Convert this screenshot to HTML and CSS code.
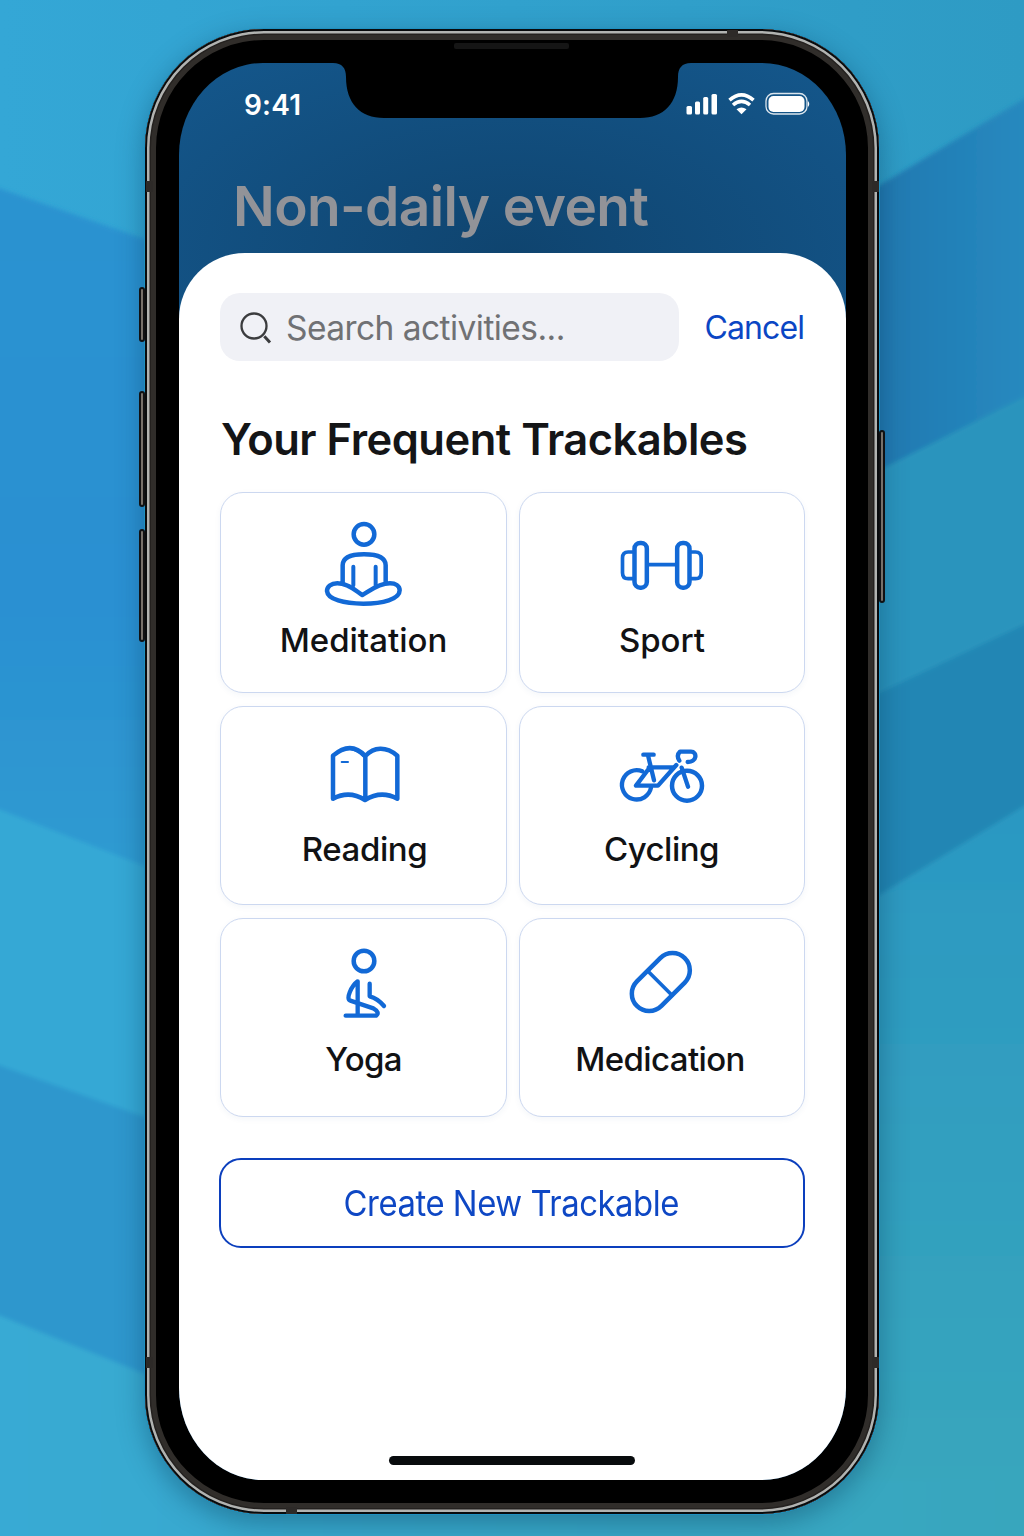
FILE: index.html
```html
<!DOCTYPE html>
<html lang="en">
<head>
<meta charset="utf-8">
<title>Non-daily event</title>
<link rel="stylesheet" href="styles.css">
</head>
<body>
<svg class="backdrop" viewBox="0 0 1024 1536" aria-hidden="true">
  <defs>
    <linearGradient id="base" x1="0" y1="0" x2="1" y2="0">
      <stop offset="0" stop-color="#34a7d6"/><stop offset="1" stop-color="#2e9bc4"/>
    </linearGradient>
    <linearGradient id="foot" gradientUnits="userSpaceOnUse" x1="0" y1="0" x2="1024" y2="0">
      <stop offset="0" stop-color="#38aad4"/><stop offset="1" stop-color="#38a6bd"/>
    </linearGradient>
    <linearGradient id="left" x1="0" y1="0" x2="0" y2="1">
      <stop offset="0" stop-color="#2b93d0"/><stop offset=".6" stop-color="#2b90d2"/><stop offset="1" stop-color="#2f9bd1"/>
    </linearGradient>
    <linearGradient id="right" gradientUnits="userSpaceOnUse" x1="870" y1="0" x2="1024" y2="0">
      <stop offset="0" stop-color="#1f78b0"/><stop offset="1" stop-color="#2789bf"/>
    </linearGradient>
    <linearGradient id="aqua" x1="0" y1="0" x2="0" y2="1">
      <stop offset="0" stop-color="#2b98c2"/><stop offset="1" stop-color="#38a6bd"/>
    </linearGradient>
    <filter id="soft"><feGaussianBlur stdDeviation="2"/></filter>
  </defs>
  <rect width="1024" height="1536" fill="url(#base)"/>
  <g filter="url(#soft)">
    <path d="M-10 185L170 248V876L-10 806z" fill="url(#left)"/>
    <path d="M-10 806L170 876V1126L-10 1062z" fill="#36a8d5"/>
    <path d="M-10 1062L170 1126V1384L-10 1312z" fill="#2d97cd"/>
    <path d="M-10 1312L170 1384L512 1450H1034V1546H-10z" fill="url(#foot)"/>
    <path d="M1034 93L860 197V480L1034 392z" fill="url(#right)"/>
    <path d="M1034 392L860 480V702L1034 620z" fill="#2994bd"/>
    <path d="M1034 620L860 702V907L1034 800z" fill="#2486b4"/>
    <path d="M1034 800L860 907V1480H1034z" fill="url(#aqua)"/>
  </g>
</svg>
<main class="phone">
  <span class="key key-mute"></span>
  <span class="key key-up"></span>
  <span class="key key-down"></span>
  <span class="key key-power"></span>
  <span class="seam seam-tl"></span>
  <span class="seam seam-tr"></span>
  <span class="seam seam-bl"></span>
  <span class="seam seam-br"></span>
  <span class="seam seam-top"></span>
  <span class="seam seam-bottom"></span>
  <span class="speaker"></span>
  <div class="screen">
    <svg class="notch" viewBox="0 0 358 56" aria-hidden="true"><path d="M0 0V1C9 1 13 6 13 15C13 41 27 56 51 56H307C331 56 345 41 345 15C345 6 349 1 358 1V0z"/></svg>
    <header class="status">
      <span class="time">9:41</span>
      <svg class="indicators" width="124" height="24" viewBox="0 0 124 24" aria-hidden="true">
        <g fill="#fff">
          <rect x=".5" y="14" width="5.500" height="8.500" rx="1.500"/>
          <rect x="9" y="9.500" width="5" height="13" rx="1.500"/>
          <rect x="17.200" y="5" width="5" height="17.500" rx="1.500"/>
          <rect x="25.500" y="2" width="5.500" height="20.500" rx="1.500"/>
          <path d="M50.500 17.300Q55.500 13.600 60.500 17.300L55.500 22.300z"/>
          <rect x="82.500" y="4" width="36" height="16" rx="5"/>
          <path d="M122 9q2.500 3 0 6z"/>
        </g>
        <g fill="none" stroke="#fff">
          <path d="M43.500 8.200Q55.500-2.500 67.500 8.200M47 13Q55.500 5.600 64 13" stroke-width="3.600"/>
          <rect x="80" y="1.500" width="41" height="20.500" rx="7.500" stroke-width="1.300" opacity=".85"/>
        </g>
      </svg>
    </header>
    <h1 class="title">Non-daily event</h1>
    <section class="sheet">
      <div class="search-row">
        <div class="search">
          <svg width="32" height="32" viewBox="0 0 32 32" fill="none" stroke="#3b3c3e" aria-hidden="true"><circle cx="14" cy="14" r="12.500" stroke-width="2.300"/><path d="M24.300 24.300L30 30.500" stroke-width="3"/></svg>
          <span class="placeholder">Search activities...</span>
        </div>
        <a class="cancel">Cancel</a>
      </div>
      <h2 class="heading">Your Frequent Trackables</h2>
      <div class="grid">
        <article class="card row-1">
          <svg class="icon" viewBox="57 57 270 270"><circle cx="192" cy="103" r="31"/><path d="M128 246V196C128 173 151 163 192 163S257 173 257 196V246M187 285C169 274 146 250 112 250C93 250 81 260 81 273C83 298 132 311 190 311S299 298 299 271C299 257 286 250 270 250C235 250 207 274 187 285z"/><path stroke-width="12" d="M160 200V256M227 200V256"/></svg>
          <span class="label l-meditation">Meditation</span>
        </article>
        <article class="card row-1">
          <svg class="icon" viewBox="51.500 -3 270 270"><rect x="104" y="69" width="37" height="134" rx="17"/><rect x="232" y="69" width="37" height="134" rx="17"/><path stroke-width="11" d="M101 96H85Q68 96 68 114V158Q68 176 85 176H101M272 96H287Q304 96 304 114V158Q304 176 287 176H272M143 134H230"/></svg>
          <span class="label l-sport">Sport</span>
        </article>
        <article class="card row-2">
          <svg class="icon" viewBox="27 -3 270 270"><path d="M166 78C139 49 107 44 69 77V206Q118 180 165 210Q213 180 262 206V77C227 48 192 51 166 78V208"/><path fill="#1269d6" stroke="none" d="M102 58Q135 47 166 75L161 84Q134 56 102 58"/><path stroke-width="6" d="M95 96H114"/></svg>
          <span class="label l-reading">Reading</span>
        </article>
        <article class="card row-2">
          <svg class="icon" viewBox="51 -3 270 270"><path stroke-width="13" d="M127 124A44 44 0 1 0 153 173"/><circle cx="261" cy="167" r="45"/><path stroke-width="13" d="M130 74H161M144 76L162 151M146 112H219M148 114L108 167H174L229 105M245 113L264 170M238 92Q228 76 240 65H273C292 65 292 96 263 96"/></svg>
          <span class="label l-cycling">Cycling</span>
        </article>
        <article class="card row-3">
          <svg class="icon" viewBox="-3 24 270 270"><circle cx="132" cy="93" r="31"/><path stroke-width="13" d="M113 254V154C94 168 76 208 91 212L160 235Q181 247 168 257H77M149 161V199Q173 205 192 228"/></svg>
          <span class="label l-yoga">Yoga</span>
        </article>
        <article class="card row-3">
          <svg class="icon" viewBox="20 24 270 270"><g transform="rotate(-45 151.500 156)"><rect x="50" y="104" width="203" height="104" rx="52"/><path stroke-width="11" d="M147 104V208"/></g></svg>
          <span class="label l-medication">Medication</span>
        </article>
      </div>
      <button class="create"><span>Create New Trackable</span></button>
      <div class="home"></div>
    </section>
  </div>
</main>
</body>
</html>
```

FILE: styles.css
```css
* { box-sizing: border-box; }
body {
  margin: 0;
  width: 1024px;
  height: 1536px;
  overflow: hidden;
  position: relative;
  padding: 29px 0 0 145px;
  font-family: Inter, "Liberation Sans", sans-serif;
}
.backdrop { position: absolute; inset: 0; width: 1024px; height: 1536px; z-index: -1; }

.phone {
  position: relative;
  width: 734px;
  height: 1485px;
  padding: 34px 33px 34px 34px;
  border-radius: 119px;
  background: #000;
  box-shadow:
    inset 0 0 0 2px #080b0d,
    inset 0 0 0 4.500px #b1b3b1,
    inset 0 0 0 6px #24211f,
    inset 0 0 0 11px #302d2a,
    0 0 0 1px #1f91c2,
    0 8px 28px rgba(5, 50, 80, .4);
}
.key {
  position: absolute;
  width: 6px;
  border: 2px solid #101113;
  border-radius: 3px;
  background: #77716b;
}
.key-mute { left: -6px; top: 258px; height: 55px; }
.key-up { left: -6px; top: 362px; height: 116px; }
.key-down { left: -6px; top: 500px; height: 113px; }
.key-power { right: -6px; top: 401px; height: 173px; }
.seam { position: absolute; background: #2d2a28; }
.seam-tl, .seam-tr, .seam-bl, .seam-br { width: 7px; height: 11px; }
.seam-tl { left: 1px; top: 152px; }
.seam-tr { right: 0; top: 152px; }
.seam-bl { left: 1px; top: 1328px; }
.seam-br { right: 0; top: 1328px; }
.seam-top, .seam-bottom { width: 11px; height: 7px; }
.seam-top { left: 582px; top: 1px; }
.seam-bottom { left: 141px; bottom: 0; }
.speaker {
  position: absolute;
  left: 309px;
  top: 14px;
  width: 115px;
  height: 6px;
  border-radius: 2px;
  background: #151515;
}

.screen {
  position: relative;
  height: 1417px;
  display: flex;
  flex-direction: column;
  overflow: hidden;
  border-radius: 84px / 92px;
  background: radial-gradient(ellipse 460px 240px at 50% 190px, #0f446f, #14568a);
}
.notch { position: absolute; left: 154px; top: -1px; width: 358px; height: 56px; }
.status {
  height: 84px;
  padding: 29px 36px 0 65px;
  display: flex;
  justify-content: space-between;
  color: #fff;
}
.time { font-size: 28px; font-weight: 600; line-height: 26px; letter-spacing: .2px; }
.title {
  margin: 0;
  height: 106px;
  padding-left: 54px;
  padding-top: 27px;
  font-size: 55px;
  line-height: 64px;
  font-weight: 600;
  letter-spacing: -.6px;
  color: #929398;
  white-space: nowrap;
}

.sheet {
  flex: 1;
  padding: 40px 41px 0;
  border-radius: 66px 66px 0 0;
  background: #fff;
  display: flex;
  flex-direction: column;
}
.search-row { display: flex; align-items: center; justify-content: space-between; height: 68px; }
.search {
  width: 459px;
  height: 68px;
  padding-left: 20px;
  padding-top: 1px;
  display: flex;
  align-items: center;
  gap: 14px;
  border-radius: 20px;
  background: #f0f1f6;
}
.placeholder { font-size: 33.500px; line-height: 40px; letter-spacing: -.55px; color: #707174; white-space: nowrap; padding-top: 1px; }
.cancel { margin-right: 1px; font-size: 32px; line-height: 40px; letter-spacing: -.9px; color: #0b46c4; white-space: nowrap; padding-top: 2px; }
.heading {
  margin: 50px 0 24px;
  padding-left: 1px;
  font-size: 43.500px;
  line-height: 57px;
  font-weight: 600;
  letter-spacing: -.5px;
  color: #141517;
  white-space: nowrap;
}
.grid {
  width: 585px;
  display: grid;
  grid-template-columns: 287px 286px;
  grid-template-rows: 201px 199px 199px;
  gap: 13px 12px;
}
.card {
  display: flex;
  flex-direction: column;
  align-items: center;
  gap: 11px;
  border: 1px solid #ccd8f0;
  border-radius: 23px;
  background: #fff;
  box-shadow: 0 2px 6px rgba(40, 70, 130, .05);
}
.row-1 { padding-top: 26px; }
.row-2 { padding-top: 22px; gap: 10px; }
.row-3 { padding-top: 19px; }
.icon {
  width: 90px;
  height: 90px;
  fill: none;
  stroke: #1269d6;
  stroke-width: 13.500px;
  stroke-linecap: round;
  stroke-linejoin: round;
}
.icon [stroke-width="12"] { stroke-width: 12px; }
.icon [stroke-width="11"] { stroke-width: 11px; }
.icon [stroke-width="6"] { stroke-width: 6px; }
.label { font-size: 33px; line-height: 40px; font-weight: 500; color: #111214; white-space: nowrap; }
.l-reading { letter-spacing: -.4px; padding-left: 2px; }
.l-cycling { letter-spacing: -.5px; padding-right: 1px; }
.l-yoga { letter-spacing: -.7px; }
.l-medication { letter-spacing: -.6px; padding-right: 4px; }
.create {
  width: 586px;
  height: 90px;
  margin: 41px 0 0 -1px;
  padding: 2px 2px 0 0;
  border: 2px solid #0c3fbd;
  border-radius: 22px;
  background: #fff;
  color: #0e47c4;
  font: 400 35.500px/40px Inter, "Liberation Sans", sans-serif;
  letter-spacing: -.5px;
  white-space: nowrap;
}
.create span { display: inline-block; transform: scaleX(.925); }
.home { width: 246px; height: 9px; margin: 208px 0 0 169px; border-radius: 5px; background: #080b0d; }
```
